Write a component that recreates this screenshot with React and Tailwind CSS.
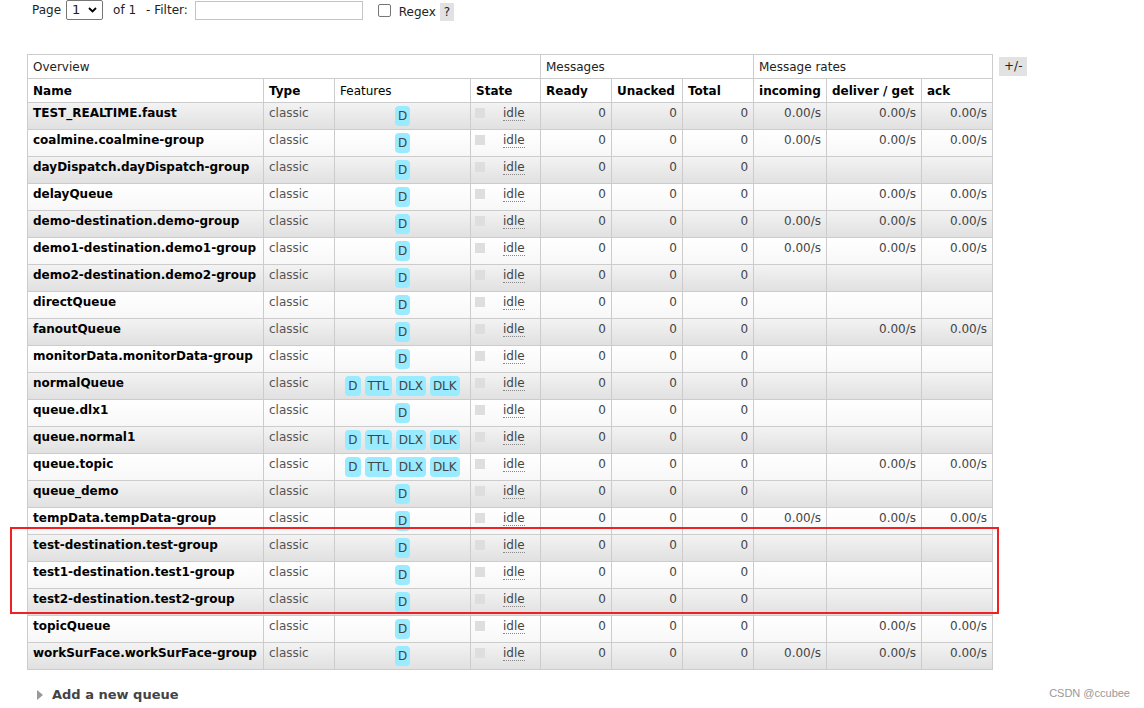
import React from "react";

const R = "0.00/s";

const queues = [
  ["TEST_REALTIME.faust", ["D"], [R, R, R]],
  ["coalmine.coalmine-group", ["D"], [R, R, R]],
  ["dayDispatch.dayDispatch-group", ["D"], ["", "", ""]],
  ["delayQueue", ["D"], ["", R, R]],
  ["demo-destination.demo-group", ["D"], [R, R, R]],
  ["demo1-destination.demo1-group", ["D"], [R, R, R]],
  ["demo2-destination.demo2-group", ["D"], ["", "", ""]],
  ["directQueue", ["D"], ["", "", ""]],
  ["fanoutQueue", ["D"], ["", R, R]],
  ["monitorData.monitorData-group", ["D"], ["", "", ""]],
  ["normalQueue", ["D", "TTL", "DLX", "DLK"], ["", "", ""]],
  ["queue.dlx1", ["D"], ["", "", ""]],
  ["queue.normal1", ["D", "TTL", "DLX", "DLK"], ["", "", ""]],
  ["queue.topic", ["D", "TTL", "DLX", "DLK"], ["", R, R]],
  ["queue_demo", ["D"], ["", "", ""]],
  ["tempData.tempData-group", ["D"], [R, R, R]],
  ["test-destination.test-group", ["D"], ["", "", ""]],
  ["test1-destination.test1-group", ["D"], ["", "", ""]],
  ["test2-destination.test2-group", ["D"], ["", "", ""]],
  ["topicQueue", ["D"], ["", R, R]],
  ["workSurFace.workSurFace-group", ["D"], [R, R, R]],
];

const cell = "border border-[#cccccc] align-top px-[5px] pt-[1px] pb-0 h-[27px]";
const head = "border border-[#cccccc] text-left px-[5px] h-[24px] align-middle";

function Badge({ children }) {
  return (
    <span className="inline-block bg-[#99ebff] text-[#444] rounded-[4px] px-[3px] leading-[16px] py-[2px] mx-[2px]">
      {children}
    </span>
  );
}

export default function App() {
  return (
    <div
      className="relative w-[1144px] h-[708px] bg-white text-[12px] text-[#222] overflow-hidden"
      style={{ fontFamily: '"DejaVu Sans", Verdana, sans-serif' }}
    >
      {/* paging / filter bar */}
      <div className="flex items-center h-[20px] pl-[32px] gap-0">
        <span>Page</span>
        <div className="ml-[5px] flex items-center justify-between w-[37px] h-[20px] border border-[#767676] rounded-[2px] px-[5px] text-[13px]">
          <span>1</span>
          <svg width="9" height="6" viewBox="0 0 9 6">
            <path d="M1 1l3.5 3.5L8 1" stroke="#000" strokeWidth="1.8" fill="none" />
          </svg>
        </div>
        <span className="ml-[10px]">of 1</span>
        <span className="ml-[10px]">- Filter:</span>
        <div className="ml-[7px] w-[168px] h-[19px] border border-[#c4c4c4]" />
        <div className="ml-[15px] w-[13px] h-[13px] border border-[#767676] rounded-[2px]" />
        <span className="ml-[8px] mt-[4px]">Regex</span>
        <span className="ml-[4px] mt-[4px] bg-[#e2e2e2] px-[4px] h-[18px] leading-[18px]">?</span>
      </div>

      {/* queues table */}
      <div className="flex items-start mt-[34px] ml-[27px] gap-[6px]">
        <table className="table-fixed border-collapse w-[966px]">
          <colgroup>
            <col className="w-[236px]" />
            <col className="w-[71px]" />
            <col className="w-[136px]" />
            <col className="w-[70px]" />
            <col className="w-[71px]" />
            <col className="w-[71px]" />
            <col className="w-[71px]" />
            <col className="w-[73px]" />
            <col className="w-[95px]" />
            <col className="w-[71px]" />
          </colgroup>
          <thead>
            <tr>
              <th colSpan={4} className={head + " font-normal"}>Overview</th>
              <th colSpan={3} className={head + " font-normal"}>Messages</th>
              <th colSpan={3} className={head + " font-normal"}>Message rates</th>
            </tr>
            <tr className="text-[#000]">
              <th className={head + " font-bold"}>Name</th>
              <th className={head + " font-bold"}>Type</th>
              <th className={head + " font-normal"}>Features</th>
              <th className={head + " font-bold"}>State</th>
              <th className={head + " font-bold"}>Ready</th>
              <th className={head + " font-bold"}>Unacked</th>
              <th className={head + " font-bold whitespace-nowrap"}>Total</th>
              <th className={head + " font-bold whitespace-nowrap"}>incoming</th>
              <th className={head + " font-bold whitespace-nowrap"}>deliver / get</th>
              <th className={head + " font-bold"}>ack</th>
            </tr>
          </thead>
          <tbody>
            {queues.map(([name, feats, rates], i) => (
              <tr
                key={name}
                className={
                  i % 2 === 0
                    ? "bg-gradient-to-b from-[#f3f3f3] to-[#e0e0e0]"
                    : "bg-gradient-to-b from-[#ffffff] to-[#f7f7f7]"
                }
              >
                <td className={cell + " font-bold text-[#000] whitespace-nowrap"}>{name}</td>
                <td className={cell + " text-[#555]"}>classic</td>
                <td className={cell + " text-center px-[3px] pt-[3px] whitespace-nowrap"}>
                  {feats.map((f) => (
                    <Badge key={f}>{f}</Badge>
                  ))}
                </td>
                <td className={cell + " pl-[4px]"}>
                  <div className="flex items-start">
                    <span className="mt-[4px] w-[10px] h-[10px] bg-[#dedede]" />
                    <span className="ml-[18px] mt-[2px] text-[#444] border-b border-dotted border-[#888] leading-[14px]">idle</span>
                  </div>
                </td>
                <td className={cell + " text-right text-[#444]"}>0</td>
                <td className={cell + " text-right text-[#444]"}>0</td>
                <td className={cell + " text-right text-[#444]"}>0</td>
                {rates.map((r, j) => (
                  <td key={j} className={cell + " text-right text-[#444] whitespace-nowrap"}>{r}</td>
                ))}
              </tr>
            ))}
          </tbody>
        </table>
        <span className="mt-[3px] bg-[#e2e2e2] px-[5px] h-[19px] leading-[19px] text-[#222]">+/-</span>
      </div>

      {/* highlight box */}
      <div className="absolute left-[10px] top-[527px] w-[989px] h-[87px] border-2 border-[#ee2222] pointer-events-none" />

      {/* footer */}
      <div className="flex items-center mt-[15px] ml-[37px]">
        <svg width="7" height="10" viewBox="0 0 7 10">
          <path d="M0 0L6 5L0 10Z" fill="#999" />
        </svg>
        <span className="ml-[8px] font-bold text-[13px] text-[#444]">Add a new queue</span>
      </div>
      <div
        className="absolute right-[14px] bottom-[7px] text-[11px] text-[#999]"
        style={{ fontFamily: '"Liberation Sans", Arial, sans-serif' }}
      >
        CSDN @ccubee
      </div>
    </div>
  );
}
